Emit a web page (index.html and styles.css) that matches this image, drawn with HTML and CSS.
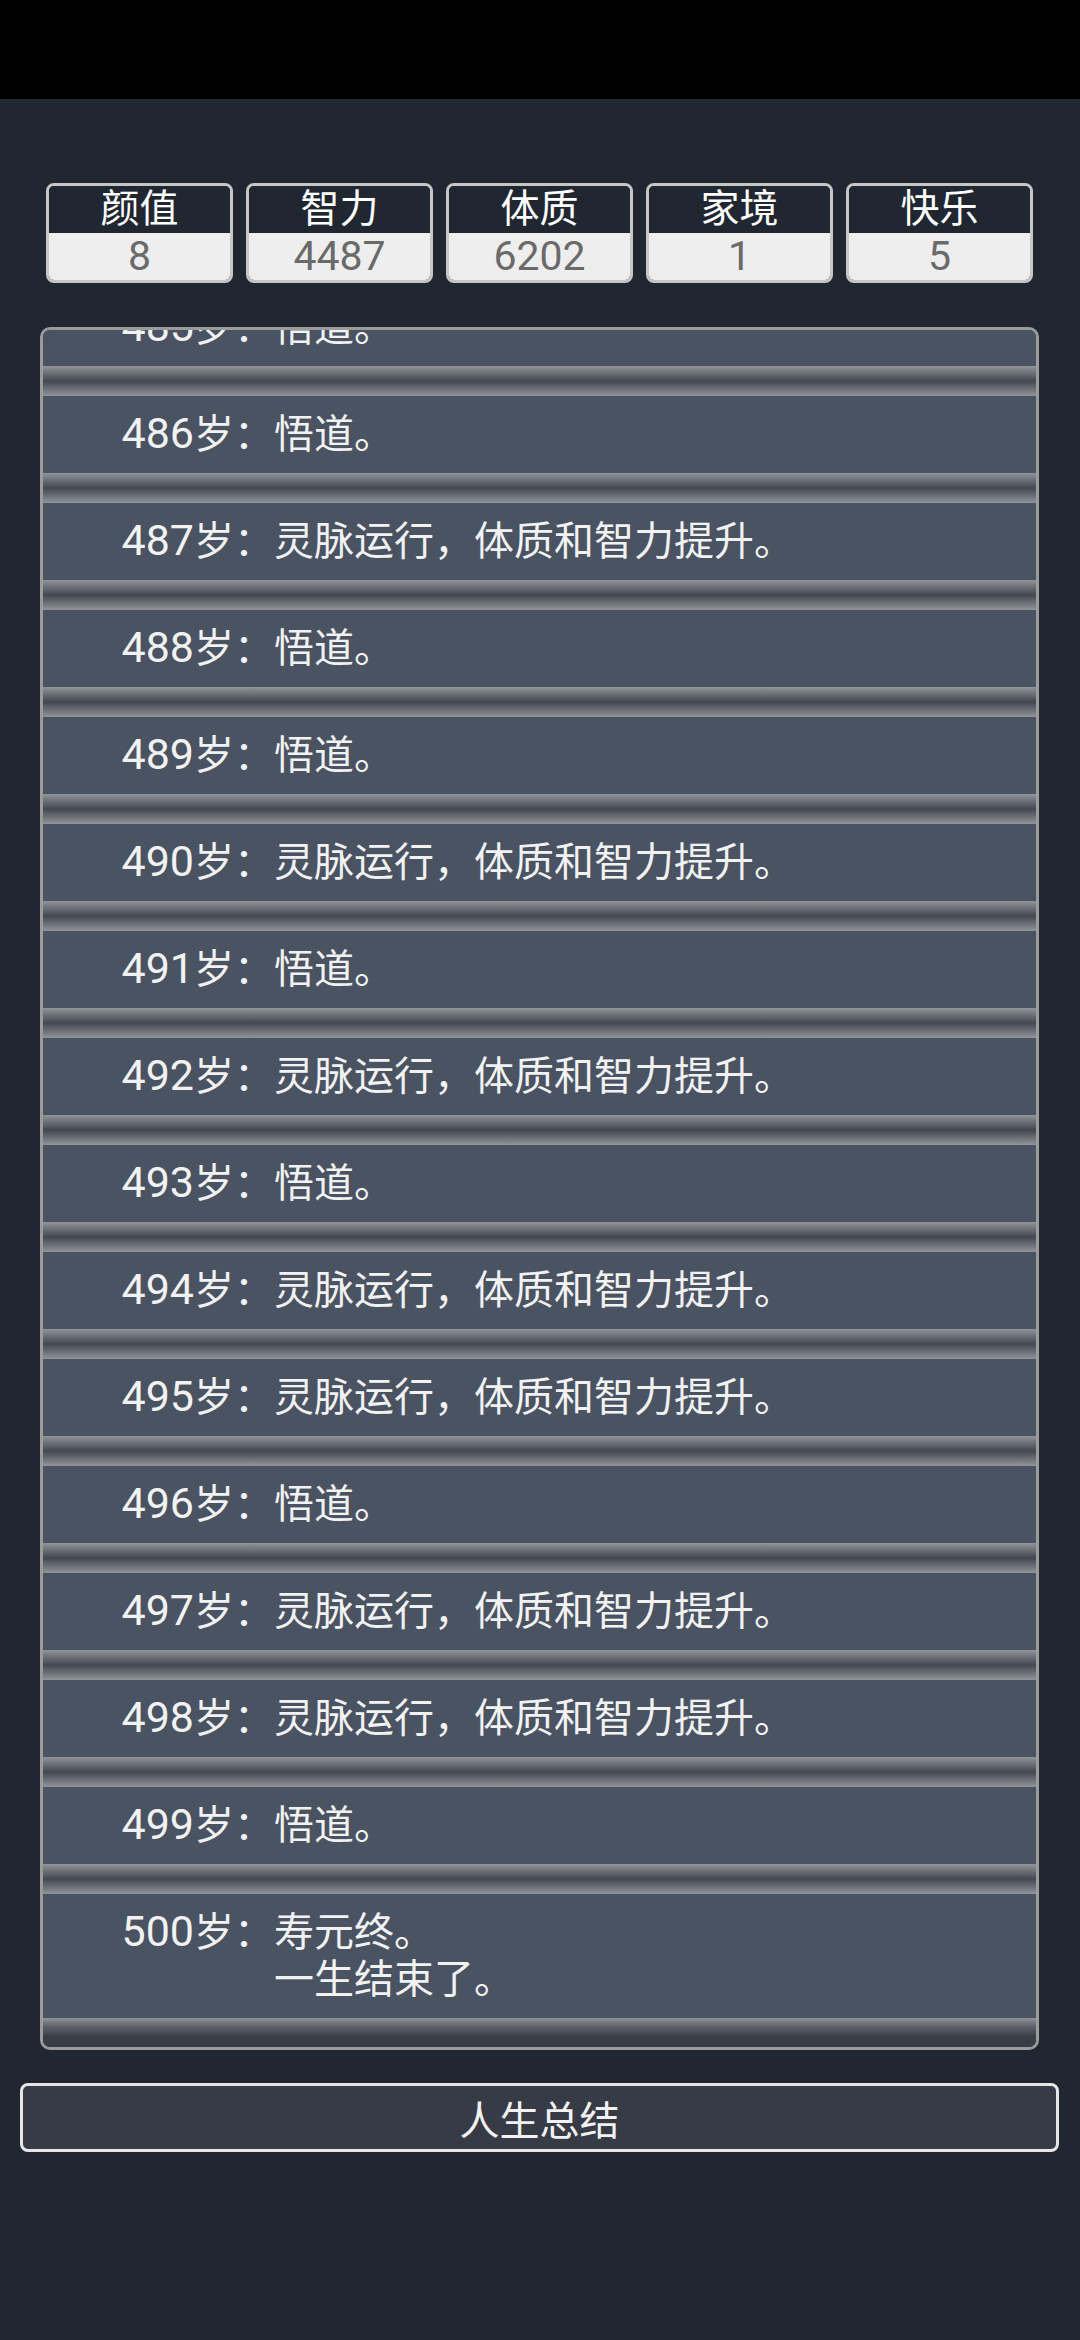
FILE: index.html
```html
<!DOCTYPE html>
<html lang="zh-CN">
<head>
    <meta charset="UTF-8">
    <meta name="viewport" content="width=device-width, initial-scale=1.0">
    <title>人生重开</title>
    <link rel="stylesheet" href="styles.css">
</head>
<body>
    <div class="barra"></div>

    <div class="propiedades">
        <div class="prop">
            <div class="prop-nombre">颜值</div>
            <div class="prop-valor">8</div>
        </div>
        <div class="prop">
            <div class="prop-nombre">智力</div>
            <div class="prop-valor">4487</div>
        </div>
        <div class="prop">
            <div class="prop-nombre">体质</div>
            <div class="prop-valor">6202</div>
        </div>
        <div class="prop">
            <div class="prop-nombre">家境</div>
            <div class="prop-valor">1</div>
        </div>
        <div class="prop">
            <div class="prop-nombre">快乐</div>
            <div class="prop-valor">5</div>
        </div>
    </div>

    <div class="divlista">
        <div class="lista">
            <div class="fila"><span class="edad"><span class="num">483</span>岁：</span><span class="evento">悟道。</span></div>
            <div class="separador"></div>
            <div class="fila"><span class="edad"><span class="num">484</span>岁：</span><span class="evento">灵脉运行，体质和智力提升。</span></div>
            <div class="separador"></div>
            <div class="fila"><span class="edad"><span class="num">485</span>岁：</span><span class="evento">悟道。</span></div>
            <div class="separador"></div>
            <div class="fila"><span class="edad"><span class="num">486</span>岁：</span><span class="evento">悟道。</span></div>
            <div class="separador"></div>
            <div class="fila"><span class="edad"><span class="num">487</span>岁：</span><span class="evento">灵脉运行，体质和智力提升。</span></div>
            <div class="separador"></div>
            <div class="fila"><span class="edad"><span class="num">488</span>岁：</span><span class="evento">悟道。</span></div>
            <div class="separador"></div>
            <div class="fila"><span class="edad"><span class="num">489</span>岁：</span><span class="evento">悟道。</span></div>
            <div class="separador"></div>
            <div class="fila"><span class="edad"><span class="num">490</span>岁：</span><span class="evento">灵脉运行，体质和智力提升。</span></div>
            <div class="separador"></div>
            <div class="fila"><span class="edad"><span class="num">491</span>岁：</span><span class="evento">悟道。</span></div>
            <div class="separador"></div>
            <div class="fila"><span class="edad"><span class="num">492</span>岁：</span><span class="evento">灵脉运行，体质和智力提升。</span></div>
            <div class="separador"></div>
            <div class="fila"><span class="edad"><span class="num">493</span>岁：</span><span class="evento">悟道。</span></div>
            <div class="separador"></div>
            <div class="fila"><span class="edad"><span class="num">494</span>岁：</span><span class="evento">灵脉运行，体质和智力提升。</span></div>
            <div class="separador"></div>
            <div class="fila"><span class="edad"><span class="num">495</span>岁：</span><span class="evento">灵脉运行，体质和智力提升。</span></div>
            <div class="separador"></div>
            <div class="fila"><span class="edad"><span class="num">496</span>岁：</span><span class="evento">悟道。</span></div>
            <div class="separador"></div>
            <div class="fila"><span class="edad"><span class="num">497</span>岁：</span><span class="evento">灵脉运行，体质和智力提升。</span></div>
            <div class="separador"></div>
            <div class="fila"><span class="edad"><span class="num">498</span>岁：</span><span class="evento">灵脉运行，体质和智力提升。</span></div>
            <div class="separador"></div>
            <div class="fila"><span class="edad"><span class="num">499</span>岁：</span><span class="evento">悟道。</span></div>
            <div class="separador"></div>
            <div class="fila"><span class="edad"><span class="num">500</span>岁：</span><span class="evento">寿元终。<br>一生结束了。</span></div>
            <div class="separador final"></div>
        </div>
    </div>

    <button class="boton-resumen">人生总结</button>
</body>
</html>
```

FILE: styles.css
```css
* {
    box-sizing: border-box;
    padding: 0;
    margin: 0;
}

html,
body {
    width: 100%;
    height: 100%;
}

body {
    background-color: #212731;
    font-family: Roboto, "Noto Sans CJK SC", sans-serif;
    color: #f2f2f2;
}

.barra {
    height: 99px;
    background-color: #000;
}

.propiedades {
    display: flex;
    gap: 13px;
    padding: 0 47px 0 46px;
    margin-top: 84px;
}

.prop {
    flex: 1;
    border: 3px solid #c6c6c6;
    border-radius: 8px;
    overflow: hidden;
    text-align: center;
}

.prop-nombre {
    height: 47px;
    line-height: 47px;
    font-size: 39px;
    color: #fff;
    background-color: #212731;
}

.prop-valor {
    height: 47px;
    line-height: 46px;
    font-size: 41px;
    color: #6a6a6a;
    background-color: #eeeeee;
}

.divlista {
    margin: 44px 41px 0 40px;
    height: 1723px;
    border: 3px solid #9b9b9b;
    border-radius: 10px;
    overflow: hidden;
    background-color: #393d46;
}

.lista {
    height: 100%;
    display: flex;
    flex-direction: column;
    justify-content: flex-end;
}

.fila {
    flex-shrink: 0;
    display: flex;
    padding: 15px 0;
    font-size: 40px;
    line-height: 47px;
    background-color: #4a5362;
}

.edad {
    flex: 0 0 231px;
    height: 47px;
    text-align: right;
}

.num {
    font-size: 43px;
    line-height: 1;
}

.evento {
    flex: 1;
}

.separador {
    flex-shrink: 0;
    height: 30px;
    background: linear-gradient(#919499, #6a6d74 25%, #43474f 50%, #6a6d74 75%, #919499);
}

.separador.final {
    height: 29px;
    background: linear-gradient(#919499, #5d6068 30%, #3a3e47 65%, #383c45);
}

.boton-resumen {
    display: block;
    width: 1039px;
    height: 69px;
    margin: 33px 0 0 20px;
    border: 3px solid #e6e6e6;
    border-radius: 8px;
    background-color: #373b45;
    color: #f2f2f2;
    font-family: Roboto, "Noto Sans CJK SC", sans-serif;
    font-size: 40px;
    cursor: pointer;
}
```
